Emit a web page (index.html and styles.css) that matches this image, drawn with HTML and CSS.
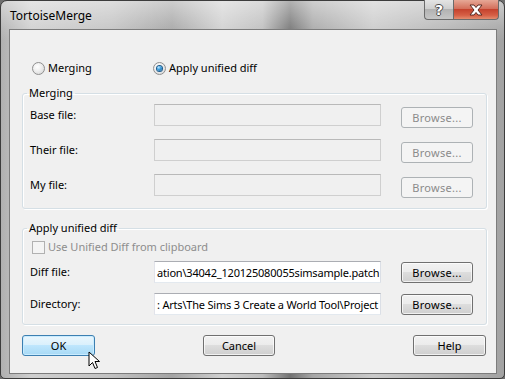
FILE: index.html
```html
<!DOCTYPE html>
<html lang="en">
<head>
    <meta charset="UTF-8">
    <title>TortoiseMerge</title>
    <link rel="stylesheet" href="styles.css">
</head>
<body>

    <div class="window">
        <!-- Caption bar -->
        <div class="titlebar">
            <span class="title">TortoiseMerge</span>
            <div class="caption-buttons">
                <span class="cap-btn help-btn">?</span>
                <span class="cap-btn close-btn">
                    <svg width="16" height="12" viewBox="0 0 16 12">
                        <path d="M2 1 L6 1 L8 3.5 L10 1 L14 1 L10 6 L14 11 L10 11 L8 8.5 L6 11 L2 11 L6 6 Z" fill="#fff" stroke="#5a2a22" stroke-width="1" stroke-linejoin="round"/>
                    </svg>
                </span>
            </div>
        </div>

        <div class="client">
            <!-- Mode selection -->
            <div class="mode-row">
                <label class="radio"><span class="radio-dot"></span>Merging</label>
                <label class="radio checked"><span class="radio-dot"></span>Apply unified diff</label>
            </div>

            <fieldset class="group group-merge">
                <legend>Merging</legend>
                <div class="file-grid">
                    <span class="row-label">Base file:</span>
                    <div class="textbox disabled"></div>
                    <button class="btn browse disabled">Browse...</button>

                    <span class="row-label">Their file:</span>
                    <div class="textbox disabled"></div>
                    <button class="btn browse disabled">Browse...</button>

                    <span class="row-label">My file:</span>
                    <div class="textbox disabled"></div>
                    <button class="btn browse disabled">Browse...</button>
                </div>
            </fieldset>

            <fieldset class="group group-diff">
                <legend>Apply unified diff</legend>
                <label class="check disabled"><span class="check-box"></span>Use Unified Diff from clipboard</label>
                <div class="file-grid">
                    <span class="row-label">Diff file:</span>
                    <div class="textbox"><span>ation\34042_120125080055simsample.patch</span></div>
                    <button class="btn browse">Browse...</button>

                    <span class="row-label">Directory:</span>
                    <div class="textbox"><span>: Arts\The Sims 3 Create a World Tool\Project</span></div>
                    <button class="btn browse">Browse...</button>
                </div>
            </fieldset>

            <!-- Dialog buttons -->
            <div class="button-row">
                <button class="btn default">OK</button>
                <button class="btn cancel">Cancel</button>
                <button class="btn help">Help</button>
            </div>
        </div>

        <!-- Mouse pointer -->
        <svg class="pointer" width="14" height="20" viewBox="0 0 14 20">
            <path d="M1 1 L1 15 L4.5 11.5 L7 17.5 L9.5 16.5 L7 10.5 L11.5 10.5 Z" fill="#fff" stroke="#000" stroke-width="1" stroke-linejoin="round"/>
        </svg>
    </div>

</body>
</html>
```

FILE: styles.css
```css
/* Page = the dialog window */
body, html {
    margin: 0;
    padding: 0;
    overflow: hidden;
    width: 505px;
    height: 379px;
    background: #6e6e6e;
}

body {
    font-family: "Noto Sans", "Open Sans", sans-serif;
    font-size: 11px;
    color: #000;
}

.window {
    position: relative;
    box-sizing: border-box;
    width: 505px;
    height: 379px;
    display: flex;
    flex-direction: column;
    padding: 0 7px 4px 8px;
    border: 1px solid #3c3c3c;
    border-radius: 7px 7px 5px 5px;
    background:
        linear-gradient(to bottom, rgba(255,255,255,0.45) 0, rgba(255,255,255,0.1) 28px, rgba(255,255,255,0) 40px),
        linear-gradient(to right, #b0b0b0 0, #cfcfcf 6%, #c2c2c2 22%, #a4a4a4 34%, #d0d0d0 44%, #bdbdbd 52%, #727272 57.5%, #a6a6a6 62%, #cacaca 74%, #b5b5b5 88%, #a2a2a2 100%);
}

/* Caption bar */
.titlebar {
    height: 28px;
    display: flex;
    justify-content: space-between;
    align-items: flex-start;
}

.title {
    margin: 7px 0 0 1px;
    font-size: 12px;
    line-height: 16px;
}

.caption-buttons {
    display: flex;
    margin: -1px -2px 0 0;
}

.cap-btn {
    height: 20px;
    box-sizing: border-box;
    display: flex;
    align-items: center;
    justify-content: center;
    border: 1px solid #6b6b6b;
    border-top: none;
}

.help-btn {
    width: 29px;
    border-radius: 0 0 0 4px;
    border-right: none;
    background: linear-gradient(to bottom, #e4e4e4 0, #cfcfcf 45%, #b2b2b2 50%, #c6c6c6 100%);
    color: #fff;
    font-family: "DejaVu Sans", sans-serif;
    font-weight: bold;
    font-size: 14px;
    line-height: 18px;
    text-shadow: 1px 0 0 #4a4a4a, -1px 0 0 #4a4a4a, 0 1px 0 #4a4a4a, 0 -1px 0 #4a4a4a;
}

.close-btn {
    width: 46px;
    border-radius: 0 0 4px 0;
    background: linear-gradient(to bottom, #e6a896 0, #d4705c 45%, #c5432e 50%, #d65f45 80%, #e38d6f 100%);
}

/* Client area */
.client {
    flex: 1;
    display: flex;
    flex-direction: column;
    background: #f0f0f0;
    border: 1px solid #7c7c7c;
    padding: 0 9px 0 12px;
}

.mode-row {
    display: flex;
    margin-top: 30px;
    padding-left: 10px;
    height: 16px;
}

.radio, .check {
    display: flex;
    align-items: center;
    gap: 3px;
    line-height: 16px;
}

.radio {
    width: 121px;
}

.radio-dot {
    width: 11px;
    height: 11px;
    border-radius: 50%;
    border: 1px solid #8f8f8f;
    background: radial-gradient(circle at 40% 35%, #fff 0, #f0f0f0 40%, #d0d0d0 100%);
    display: flex;
    align-items: center;
    justify-content: center;
}

.radio.checked .radio-dot::after {
    content: "";
    width: 5px;
    height: 5px;
    border-radius: 50%;
    background: radial-gradient(circle at 35% 30%, #bfe6ff 0, #3ea0e0 40%, #155c96 100%);
    box-shadow: 0 0 0 1px #1e5c8c;
}

/* Group boxes */
.group {
    margin: 9px 0 0 0;
    padding: 3px 13px 10px 7px;
    border: 1px solid #d5dfe5;
    border-radius: 3px;
    box-shadow: inset 1px 1px 0 #fff, 1px 1px 0 #fff;
}

.group legend {
    padding: 0 2px;
    margin-left: -3px;
    line-height: 16px;
}

.group-diff {
    margin-top: 11px;
    padding-bottom: 9px;
}

.file-grid {
    display: grid;
    grid-template-columns: 1fr 227px 72px;
    column-gap: 20px;
    row-gap: 10px;
    align-items: start;
}

.group-merge .file-grid {
    row-gap: 11px;
}

.row-label {
    line-height: 22px;
}

.textbox {
    box-sizing: border-box;
    height: 22px;
    border: 1px solid #abadb3;
    border-left-color: #e2e3ea;
    border-right-color: #dbdfe6;
    border-bottom-color: #e3e9ef;
    background: #fff;
    display: flex;
    align-items: center;
    overflow: hidden;
    white-space: nowrap;
    padding: 0 2px;
    letter-spacing: -0.2px;
}

.textbox.disabled {
    background: #f0f0f0;
    border-color: #cfcfcf;
    border-top-color: #b9b9b9;
}

/* Push buttons */
.btn {
    box-sizing: border-box;
    height: 21px;
    margin: 0;
    padding: 0;
    font: inherit;
    color: #000;
    border: 1px solid #707070;
    border-radius: 3px;
    background: linear-gradient(to bottom, #f2f2f2 0, #ebebeb 50%, #dddddd 50%, #cfcfcf 100%);
    box-shadow: inset 0 0 0 1px rgba(255,255,255,0.7);
}

.browse {
    margin-top: 3px;
    letter-spacing: 0.3px;
}

.group-diff .browse {
    margin-top: 1px;
}

.btn.disabled {
    color: #8b8b8b;
    border-color: #adb2b5;
    background: #f4f4f4;
    box-shadow: none;
}

.check {
    margin: 0 0 6px 2px;
}

.check.disabled {
    color: #8d8d8d;
}

.check-box {
    width: 11px;
    height: 11px;
    border: 1px solid #b1b1b1;
    background: #f4f4f4;
}

.button-row {
    display: flex;
    margin-top: 10px;
}

.button-row .btn {
    width: 73px;
}

.button-row .cancel {
    width: 72px;
    margin-left: 108px;
}

.button-row .help {
    margin-left: auto;
    margin-right: 1px;
}

.btn.default {
    border-color: #3c7fb1;
    background: linear-gradient(to bottom, #eaf6fd 0, #d9f0fc 50%, #bee6fd 50%, #a7d9f5 100%);
    box-shadow: inset 0 0 0 1px #c9ecff;
}

.pointer {
    position: absolute;
    left: 87px;
    top: 350px;
}
```
